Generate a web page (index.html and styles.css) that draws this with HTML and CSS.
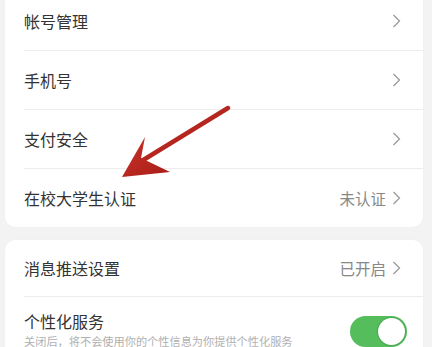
FILE: index.html
```html
<!DOCTYPE html>
<html lang="zh-CN">
<head>
<meta charset="utf-8">
<link rel="stylesheet" href="styles.css">
</head>
<body>
<div class="page">
  <div class="card card-top">
    <div class="row"><span class="label">帐号管理</span><span class="right"><svg class="chev" viewBox="0 0 8 14"><polyline points="1,1 7,7 1,13"/></svg></span></div>
    <div class="row"><span class="label">手机号</span><span class="right"><svg class="chev" viewBox="0 0 8 14"><polyline points="1,1 7,7 1,13"/></svg></span></div>
    <div class="row"><span class="label">支付安全</span><span class="right"><svg class="chev" viewBox="0 0 8 14"><polyline points="1,1 7,7 1,13"/></svg></span></div>
    <div class="row"><span class="label">在校大学生认证</span><span class="right"><span class="value">未认证</span><svg class="chev" viewBox="0 0 8 14"><polyline points="1,1 7,7 1,13"/></svg></span></div>
  </div>
  <div class="card card-second">
    <div class="row row-short"><span class="label">消息推送设置</span><span class="right"><span class="value">已开启</span><svg class="chev" viewBox="0 0 8 14"><polyline points="1,1 7,7 1,13"/></svg></span></div>
    <div class="row row-tall">
      <div class="texts">
        <span class="label">个性化服务</span>
        <span class="sub">关闭后，将不会使用你的个性信息为你提供个性化服务</span>
      </div>
      <span class="toggle"><span class="knob"></span></span>
    </div>
  </div>
  <svg class="arrow" viewBox="0 0 432 347" width="432" height="347">
    <defs>
      <linearGradient id="ag" x1="0" y1="0" x2="1" y2="1">
        <stop offset="0" stop-color="#c8332a"/>
        <stop offset="1" stop-color="#a81d17"/>
      </linearGradient>
    </defs>
    <line x1="228" y1="108" x2="140" y2="162" stroke="#b5261f" stroke-width="4.5" stroke-linecap="round"/>
    <polygon points="122,177 145,137 141,158 170,172" fill="url(#ag)"/>
  </svg>
</div>
</body>
</html>
```

FILE: styles.css
```css
html, body {
  margin: 0;
  padding: 0;
  background: #f3f3f3;
  font-family: "Noto Sans CJK SC", "Noto Sans", sans-serif;
  overflow: hidden;
}
.page {
  position: relative;
  width: 432px;
  height: 347px;
  overflow: hidden;
}
.card {
  margin-left: 5px;
  width: 418px;
  background: #fff;
  border-radius: 10px;
  padding-left: 19px;
  box-sizing: border-box;
  box-shadow: 0 0 2px rgba(0,0,0,0.04);
}
.card-top {
  margin-top: -8px;
}
.card-second {
  margin-top: 13px;
}
.row {
  height: 58px;
  display: flex;
  align-items: center;
  justify-content: space-between;
  border-bottom: 1px solid #ececec;
  padding-right: 22px;
}
.row:last-child {
  border-bottom: none;
}
.row-short {
  height: 56px;
}
.row-tall {
  height: 60px;
  align-items: flex-start;
  padding-right: 16px;
}
.label {
  font-size: 16px;
  color: #333;
  line-height: 20px;
}
.right {
  display: flex;
  align-items: center;
  gap: 6px;
}
.value {
  font-size: 15.5px;
  color: #888;
  line-height: 20px;
}
.chev {
  width: 9px;
  height: 14px;
  fill: none;
  stroke: #9a9a9a;
  stroke-width: 1.3;
}
.texts {
  display: flex;
  flex-direction: column;
  padding-top: 14px;
  gap: 2px;
}
.sub {
  font-size: 11.2px;
  color: #b0b0b0;
  line-height: 16px;
  white-space: nowrap;
}
.toggle {
  margin-top: 19px;
  width: 57px;
  height: 31px;
  border-radius: 16px;
  background: #55bd5b;
  position: relative;
  flex: none;
}
.knob {
  position: absolute;
  right: 2px;
  top: 2px;
  width: 27px;
  height: 27px;
  border-radius: 50%;
  background: #fff;
  box-shadow: 0 0 1px 1px rgba(0,0,0,0.12);
}
.arrow {
  position: absolute;
  left: 0;
  top: 0;
  pointer-events: none;
}
```
